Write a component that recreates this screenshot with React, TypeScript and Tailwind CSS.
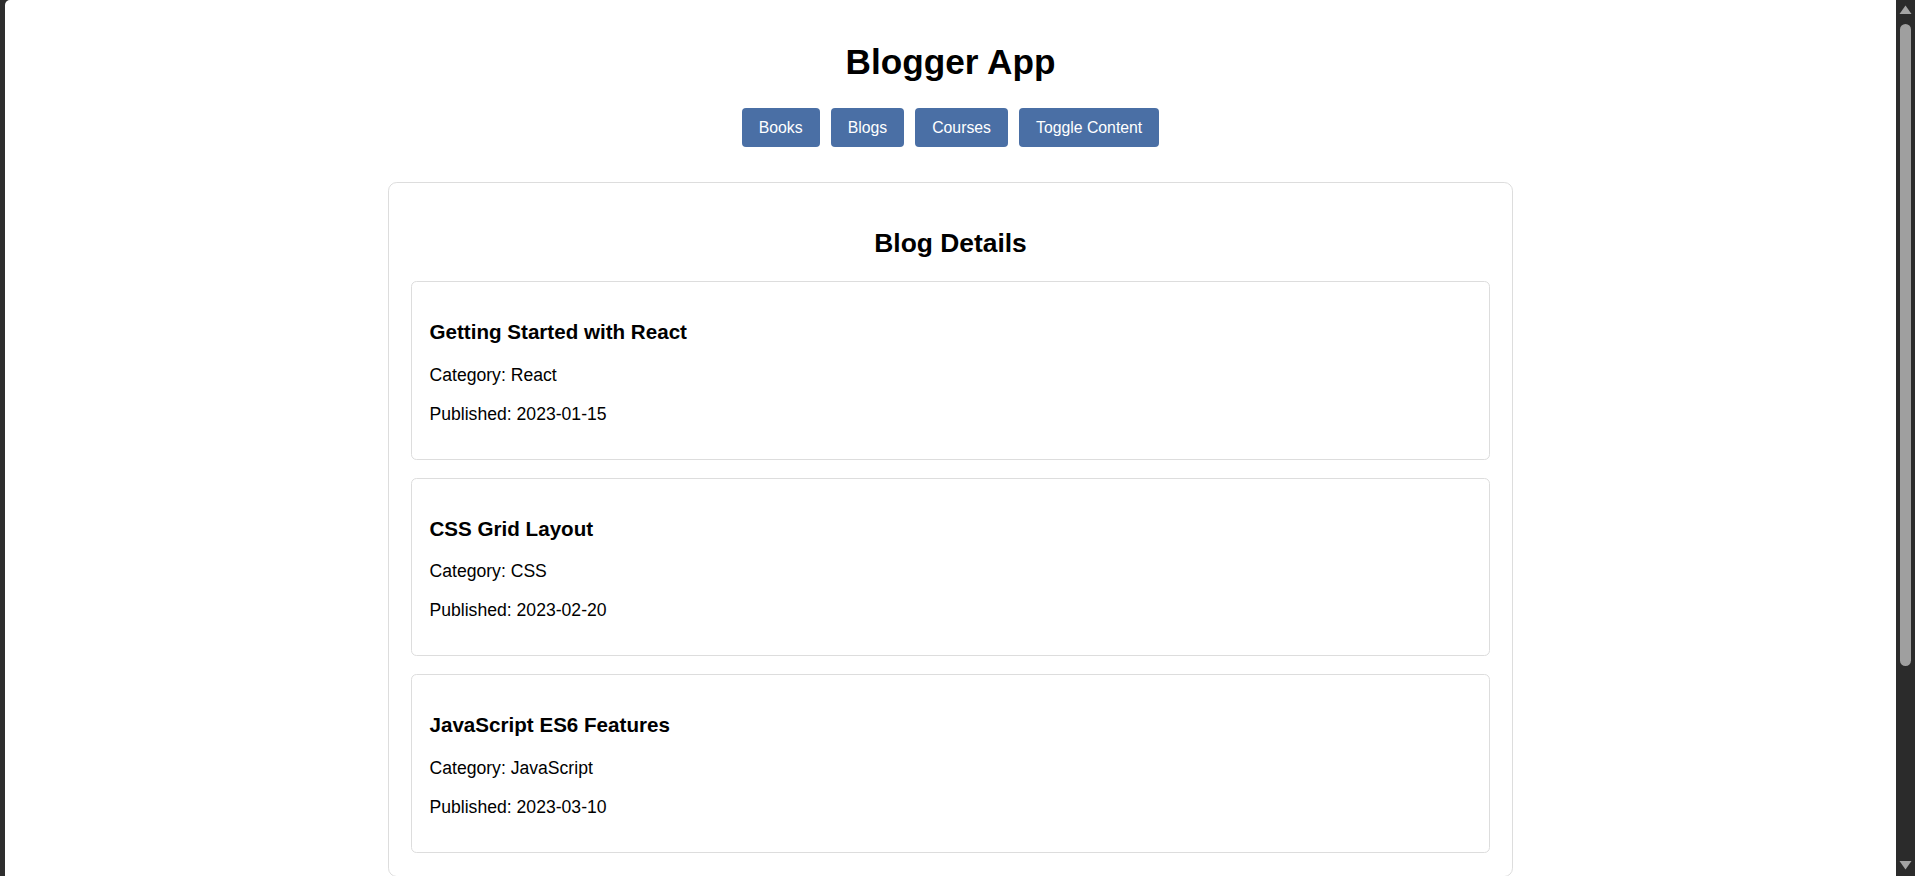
import React, { useState } from 'react';

interface Blog {
  id: number;
  title: string;
  category: string;
  published: string;
}

const blogs: Blog[] = [
  { id: 1, title: 'Getting Started with React', category: 'React', published: '2023-01-15' },
  { id: 2, title: 'CSS Grid Layout', category: 'CSS', published: '2023-02-20' },
  { id: 3, title: 'JavaScript ES6 Features', category: 'JavaScript', published: '2023-03-10' },
];

const tabs = ['Books', 'Blogs', 'Courses'];

const BlogCard = ({ blog }: { blog: Blog }) => (
  <div className="rounded-[5.5px] border border-[#dddddd] px-[17.5px] pt-[38px] pb-[31px]">
    <h3 className="text-[20.6px] font-bold leading-[24px] text-black">{blog.title}</h3>
    <p className="mt-[16.7px] text-[17.6px] leading-[28px] text-black">Category: {blog.category}</p>
    <p className="mt-[11px] text-[17.6px] leading-[28px] text-black">Published: {blog.published}</p>
  </div>
);

// fake browser scrollbar on the right edge
const Scrollbar = () => (
  <div className="flex w-[19px] shrink-0 flex-col items-center bg-[#2b2b2b]">
    <svg width="13" height="10" viewBox="0 0 13 10" className="mt-[5px] shrink-0">
      <path d="M6.5 0.5 L12.5 9 L0.5 9 Z" fill="#a3a3a3" />
    </svg>
    <div className="mt-[9px] h-[642px] w-[11px] shrink-0 rounded-full bg-[#9f9f9f]" />
    <div className="flex-1" />
    <svg width="13" height="10" viewBox="0 0 13 10" className="mb-[6px] shrink-0">
      <path d="M0.5 1 L12.5 1 L6.5 9.5 Z" fill="#a3a3a3" />
    </svg>
  </div>
);

const App = () => {
  const [active, setActive] = useState('Blogs');
  const [showContent, setShowContent] = useState(true);

  return (
    <div className="flex h-screen w-full overflow-hidden bg-[#2e2e2e] font-['Liberation_Sans',Arial,sans-serif]">
      <div className="w-[5px] shrink-0" />
      <div className="flex-1 overflow-hidden rounded-tl-[5px] bg-white">
        <div className="flex flex-col items-center pt-[42px]">
          <h1 className="text-[35.2px] font-bold leading-[40px] text-black">Blogger App</h1>

          {/* Nav buttons */}
          <div className="mt-[26px] flex gap-[11px]">
            {tabs.map((tab) => (
              <button
                key={tab}
                onClick={() => setActive(tab)}
                className="h-[39px] rounded-[4px] bg-[#4a6fa5] px-[17px] text-[15.8px] text-white"
              >
                {tab}
              </button>
            ))}
            <button
              onClick={() => setShowContent(!showContent)}
              className="h-[39px] rounded-[4px] bg-[#4a6fa5] px-[17px] text-[15.8px] text-white"
            >
              Toggle Content
            </button>
          </div>

          {/* Details panel */}
          {showContent && active === 'Blogs' && (
            <div className="mt-[35px] w-[1125px] rounded-[8.8px] border border-[#dddddd] px-[22px] pt-[45px] pb-[23px]">
              <h2 className="text-center text-[26.4px] font-bold leading-[30px] text-black">Blog Details</h2>
              <div className="mt-[23px] flex flex-col gap-[18px]">
                {blogs.map((blog) => (
                  <BlogCard key={blog.id} blog={blog} />
                ))}
              </div>
            </div>
          )}
        </div>
      </div>
      <Scrollbar />
    </div>
  );
};

export default App;
